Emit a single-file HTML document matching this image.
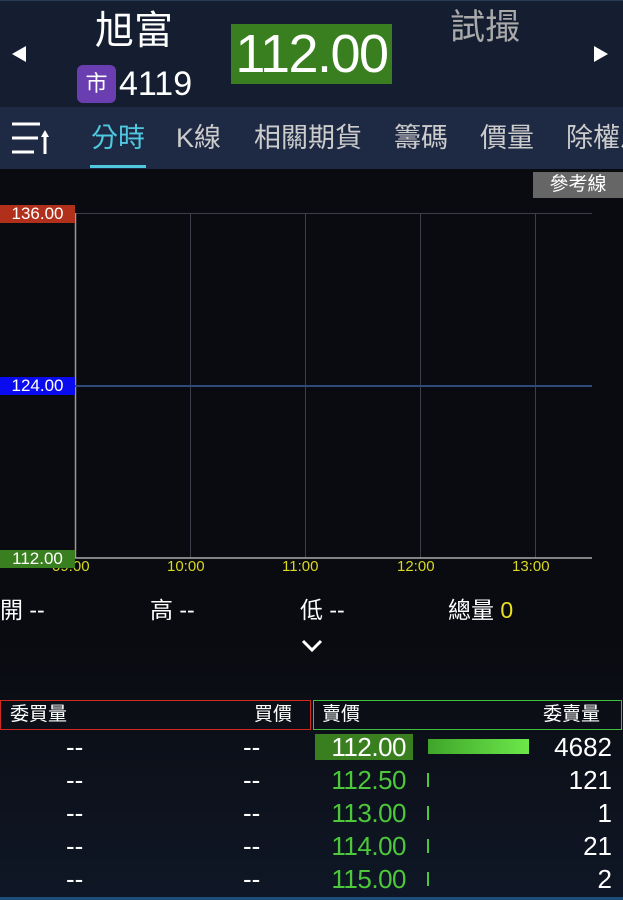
<!DOCTYPE html>
<html><head><meta charset="utf-8"><style>
*{margin:0;padding:0;box-sizing:border-box}
body{width:623px;height:900px;overflow:hidden;background:linear-gradient(#0a0b10 0,#0a0b10 640px,#0f1726 900px);font-family:"Liberation Sans","Noto Sans CJK TC",sans-serif;color:#fff;position:relative}
.a{position:absolute;white-space:nowrap}
</style></head><body>
<div class="a" style="left:0;top:0;width:623px;height:107px;background:#151e30;border-top:1px solid #2a3b55"></div>
<div class="a" style="left:0;top:107px;width:623px;height:62px;background:#1e2943"></div>
<svg class="a" style="left:10px;top:44px" width="20" height="20"><polygon points="16,2 16,18 2,10" fill="#fff"/></svg>
<svg class="a" style="left:592px;top:44px" width="20" height="20"><polygon points="2,2 2,18 16,10" fill="#fff"/></svg>
<div class="a" style="left:95px;top:8px;font-size:39px;line-height:48px">旭富</div>
<div class="a" style="left:77px;top:65px;width:39px;height:38px;background:#6a3eb0;border-radius:6px;font-size:22px;line-height:38px;text-align:center">市</div>
<div class="a" style="left:119px;top:63px;font-size:34px;line-height:42px">4119</div>
<div class="a" style="left:231px;top:24px;width:161px;height:60px;background:#3a7f1f;font-size:54px;line-height:60px;text-align:center;letter-spacing:-1.5px">112.00</div>
<div class="a" style="left:450px;top:6px;font-size:35px;line-height:44px;color:#aaa">試撮</div>
<svg class="a" style="left:10px;top:120px" width="40" height="36" stroke="#fff" stroke-width="3"><line x1="2" y1="4" x2="30" y2="4"/><line x1="2" y1="18" x2="28" y2="18"/><line x1="2" y1="32" x2="24" y2="32"/><line x1="35" y1="14" x2="35" y2="34"/><polygon points="35,10 31,17 39,17" fill="#fff" stroke="none"/></svg>
<div class="a" style="left:91px;top:121px;font-size:27px;line-height:34px;color:#4fc8e0">分時</div>
<div class="a" style="left:90px;top:165px;width:56px;height:3px;background:#4fc8e0"></div>
<div class="a" style="left:176px;top:121px;font-size:27px;line-height:34px;color:#ccc">K線</div>
<div class="a" style="left:254px;top:121px;font-size:27px;line-height:34px;color:#ccc">相關期貨</div>
<div class="a" style="left:394px;top:121px;font-size:27px;line-height:34px;color:#ccc">籌碼</div>
<div class="a" style="left:480px;top:121px;font-size:27px;line-height:34px;color:#ccc">價量</div>
<div class="a" style="left:566px;top:121px;font-size:27px;line-height:34px;color:#ccc">除權息</div>
<div class="a" style="left:533px;top:172px;width:90px;height:26px;background:#666;font-size:19px;line-height:26px;text-align:center;color:#fff">參考線</div>
<svg class="a" style="left:0;top:200px" width="623" height="380">
<g stroke="#3c3f4a" stroke-width="1"><line x1="76" y1="13.5" x2="592" y2="13.5"/><line x1="190.5" y1="13" x2="190.5" y2="358"/><line x1="305.5" y1="13" x2="305.5" y2="358"/><line x1="420.5" y1="13" x2="420.5" y2="358"/><line x1="535.5" y1="13" x2="535.5" y2="358"/></g>
<line x1="75.5" y1="13" x2="75.5" y2="358" stroke="#999" stroke-width="1.5"/>
<line x1="75" y1="358" x2="592" y2="358" stroke="#aaa" stroke-width="1.5"/>
<line x1="75" y1="186" x2="592" y2="186" stroke="#2d4a7a" stroke-width="2"/>
</svg>
<div class="a" style="left:0;top:205px;width:75px;height:18px;background:#b0301c;font-size:17px;line-height:18px;text-align:center">136.00</div>
<div class="a" style="left:0;top:377px;width:75px;height:18px;background:#0b0bf0;font-size:17px;line-height:18px;text-align:center">124.00</div>
<div class="a" style="left:52px;top:559px;font-size:15px;line-height:16px;color:#d8d820">09:00</div>
<div class="a" style="left:0;top:550px;width:75px;height:18px;background:#3a7f1f;font-size:17px;line-height:18px;text-align:center">112.00</div>
<div class="a" style="left:167px;top:559px;font-size:15px;line-height:16px;color:#d8d820">10:00</div>
<div class="a" style="left:282px;top:559px;font-size:15px;line-height:16px;color:#d8d820">11:00</div>
<div class="a" style="left:397px;top:559px;font-size:15px;line-height:16px;color:#d8d820">12:00</div>
<div class="a" style="left:512px;top:559px;font-size:15px;line-height:16px;color:#d8d820">13:00</div>
<div class="a" style="left:0;top:596px;font-size:23px;line-height:28px">開 --</div>
<div class="a" style="left:150px;top:596px;font-size:23px;line-height:28px">高 --</div>
<div class="a" style="left:300px;top:596px;font-size:23px;line-height:28px">低 --</div>
<div class="a" style="left:448px;top:596px;font-size:23px;line-height:28px">總量 <span style="color:#e8e020">0</span></div>
<svg class="a" style="left:300px;top:638px" width="24" height="16"><polyline points="3,3 12,12 21,3" fill="none" stroke="#fff" stroke-width="3"/></svg>
<div class="a" style="left:0;top:700px;width:311px;height:30px;border:1.5px solid #d02a20"></div>
<div class="a" style="left:313px;top:700px;width:309px;height:30px;border:1.5px solid #3ec03a"></div>
<div class="a" style="left:10px;top:702px;font-size:19px;line-height:26px">委買量</div>
<div class="a" style="left:254px;top:702px;font-size:19px;line-height:26px">買價</div>
<div class="a" style="left:322px;top:702px;font-size:19px;line-height:26px">賣價</div>
<div class="a" style="left:543px;top:702px;font-size:19px;line-height:26px">委賣量</div>
<div class="a" style="left:315px;top:734px;width:98px;height:26px;background:#3a7f1f"></div>
<div class="a" style="left:428px;top:739px;width:101px;height:15px;background:linear-gradient(90deg,#3fa52a,#6ce84a)"></div>
<div style="position:absolute;left:0;top:731px;width:623px;font-size:26px;line-height:33px">
<div style="position:relative;height:33px"><span class="a" style="left:66px">--</span><span class="a" style="left:243px">--</span><span class="a" style="right:217px;letter-spacing:-0.5px">112.00</span><span class="a" style="right:11px">4682</span></div>
<div style="position:relative;height:33px"><span class="a" style="left:66px">--</span><span class="a" style="left:243px">--</span><span class="a" style="right:217px;color:#4cc83a;letter-spacing:-0.5px">112.50</span><span class="a" style="left:427px;top:9px;width:2px;height:14px;background:#4cc83a"></span><span class="a" style="right:11px">121</span></div>
<div style="position:relative;height:33px"><span class="a" style="left:66px">--</span><span class="a" style="left:243px">--</span><span class="a" style="right:217px;color:#4cc83a;letter-spacing:-0.5px">113.00</span><span class="a" style="left:427px;top:9px;width:2px;height:14px;background:#4cc83a"></span><span class="a" style="right:11px">1</span></div>
<div style="position:relative;height:33px"><span class="a" style="left:66px">--</span><span class="a" style="left:243px">--</span><span class="a" style="right:217px;color:#4cc83a;letter-spacing:-0.5px">114.00</span><span class="a" style="left:427px;top:9px;width:2px;height:14px;background:#4cc83a"></span><span class="a" style="right:11px">21</span></div>
<div style="position:relative;height:33px"><span class="a" style="left:66px">--</span><span class="a" style="left:243px">--</span><span class="a" style="right:217px;color:#4cc83a;letter-spacing:-0.5px">115.00</span><span class="a" style="left:427px;top:9px;width:2px;height:14px;background:#4cc83a"></span><span class="a" style="right:11px">2</span></div>
</div>
<div class="a" style="left:0;top:897px;width:623px;height:3px;background:#1d4f7a"></div>
</body></html>
